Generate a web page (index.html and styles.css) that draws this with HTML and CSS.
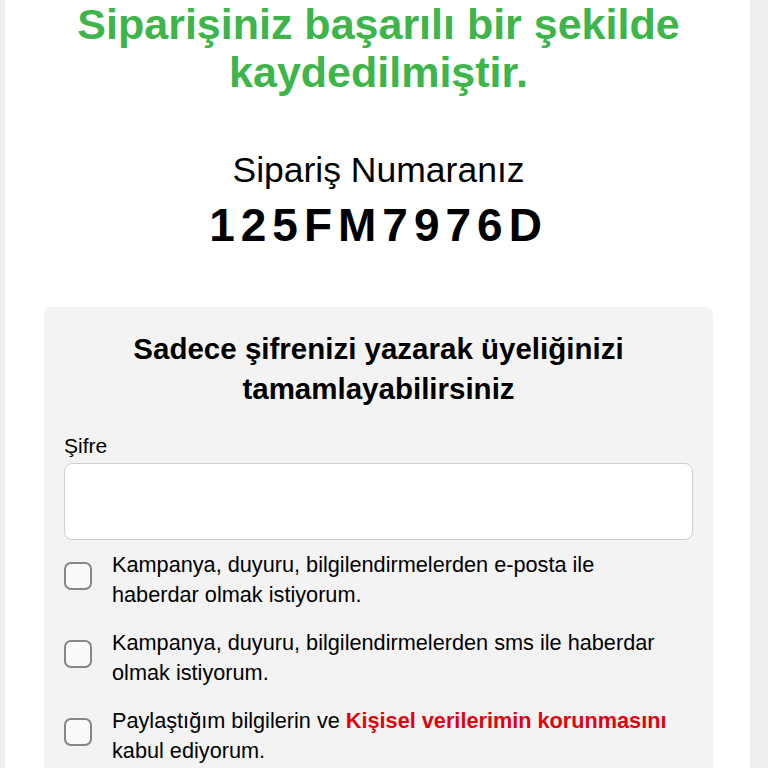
FILE: index.html
```html
<!DOCTYPE html>
<html lang="tr">
<head>
<meta charset="utf-8">
<title>Sipariş Onayı</title>
<link rel="stylesheet" href="styles.css">
</head>
<body>
<main class="page">
  <h1 class="success-title">Siparişiniz başarılı bir şekilde kaydedilmiştir.</h1>
  <section class="order">
    <p class="order-label">Sipariş Numaranız</p>
    <p class="order-number">125FM7976D</p>
  </section>
  <section class="card">
    <h2 class="card-title">Sadece şifrenizi yazarak üyeliğinizi tamamlayabilirsiniz</h2>
    <label class="field-label" for="pw">Şifre</label>
    <input class="field-input" id="pw" type="password">
    <div class="check-list">
      <label class="check-row">
        <span class="check-box"></span>
        <span class="check-text">Kampanya, duyuru, bilgilendirmelerden e-posta ile haberdar olmak istiyorum.</span>
      </label>
      <label class="check-row">
        <span class="check-box"></span>
        <span class="check-text">Kampanya, duyuru, bilgilendirmelerden sms ile haberdar olmak istiyorum.</span>
      </label>
      <label class="check-row">
        <span class="check-box"></span>
        <span class="check-text">Paylaştığım bilgilerin ve <a class="link-red" href="#">Kişisel verilerimin korunmasını</a> kabul ediyorum.</span>
      </label>
    </div>
  </section>
</main>
</body>
</html>
```
FILE: styles.css
```css
html, body {
  margin: 0;
  padding: 0;
}
body {
  background: #efefef;
  font-family: "Liberation Sans", Arial, Helvetica, sans-serif;
  color: #000;
}
.page {
  margin-left: 5px;
  width: 745px;
  min-height: 768px;
  background: #fff;
  padding: 0 37px 0 39px;
  box-sizing: border-box;
  overflow: hidden;
}
.success-title {
  margin: 0;
  color: #3db54a;
  font-size: 43px;
  line-height: 48px;
  font-weight: bold;
  text-align: center;
}
.order {
  text-align: center;
  margin-top: 54px;
}
.order-label {
  margin: 0;
  font-size: 35.5px;
  line-height: 40px;
}
.order-number {
  margin: 10px 0 0;
  font-size: 46px;
  line-height: 50px;
  font-weight: bold;
  letter-spacing: 6px;
}
.card {
  margin-top: 57px;
  background: #f3f3f3;
  border-radius: 7px;
  padding: 22px 20px 20px;
}
.card-title {
  margin: 0 0 24px;
  font-size: 29.5px;
  line-height: 40px;
  font-weight: bold;
  text-align: center;
}
.field-label {
  display: block;
  font-size: 21px;
  line-height: 26px;
}
.field-input {
  display: block;
  box-sizing: border-box;
  width: 100%;
  height: 77px;
  margin: 4px 0 0;
  background: #fff;
  border: 1px solid #cfcfcf;
  border-radius: 8px;
}
.check-list {
  display: flex;
  flex-direction: column;
  gap: 18px;
  margin-top: 10px;
}
.check-row {
  display: flex;
  align-items: flex-start;
  gap: 20px;
  padding-right: 12px;
}
.check-box {
  flex: none;
  width: 28px;
  height: 28px;
  box-sizing: border-box;
  margin-top: 12px;
  border: 2px solid #868686;
  border-radius: 7px;
  background: #fafafa;
}
.check-text {
  font-size: 21.7px;
  line-height: 30px;
}
.link-red {
  color: #e3000f;
  font-weight: bold;
  text-decoration: none;
}
```
